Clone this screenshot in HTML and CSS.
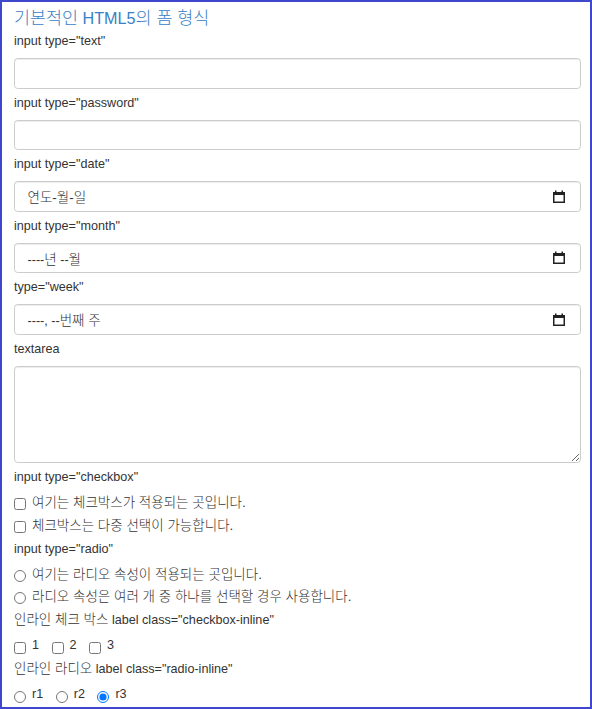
FILE: index.html
```html
<!DOCTYPE html>
<html lang="ko">
<head>
<meta charset="utf-8">
<title>기본적인 HTML5의 폼 형식</title>
<link rel="stylesheet" href="styles.css">
</head>
<body>
<div class="page">
  <h1 class="title"><span class="ko">기본적인</span> HTML5<span class="ko">의 폼 형식</span></h1>

  <label class="lbl">input type="text"</label>
  <input class="field" type="text">

  <label class="lbl">input type="password"</label>
  <input class="field" type="password">

  <label class="lbl">input type="date"</label>
  <div class="field picker">
    <span class="ko">연도-월-일</span>
    <svg class="cal" width="12" height="13" viewBox="0 0 12 13"><rect x="0.75" y="2.75" width="10.5" height="9.5" fill="none" stroke="#222" stroke-width="1.5"/><rect x="0" y="2" width="12" height="3" fill="#222"/><rect x="2" y="0.5" width="1.5" height="2" fill="#222"/><rect x="8.5" y="0.5" width="1.5" height="2" fill="#222"/></svg>
  </div>

  <label class="lbl">input type="month"</label>
  <div class="field picker">
    <span>----<span class="ko">년</span> --<span class="ko">월</span></span>
    <svg class="cal" width="12" height="13" viewBox="0 0 12 13"><rect x="0.75" y="2.75" width="10.5" height="9.5" fill="none" stroke="#222" stroke-width="1.5"/><rect x="0" y="2" width="12" height="3" fill="#222"/><rect x="2" y="0.5" width="1.5" height="2" fill="#222"/><rect x="8.5" y="0.5" width="1.5" height="2" fill="#222"/></svg>
  </div>

  <label class="lbl">type="week"</label>
  <div class="field picker">
    <span>----, --<span class="ko">번째 주</span></span>
    <svg class="cal" width="12" height="13" viewBox="0 0 12 13"><rect x="0.75" y="2.75" width="10.5" height="9.5" fill="none" stroke="#222" stroke-width="1.5"/><rect x="0" y="2" width="12" height="3" fill="#222"/><rect x="2" y="0.5" width="1.5" height="2" fill="#222"/><rect x="8.5" y="0.5" width="1.5" height="2" fill="#222"/></svg>
  </div>

  <label class="lbl">textarea</label>
  <textarea class="field area"></textarea>

  <label class="lbl">input type="checkbox"</label>
  <label class="check"><input type="checkbox"><span class="ko">여기는 체크박스가 적용되는 곳입니다.</span></label>
  <label class="check next"><input type="checkbox"><span class="ko">체크박스는 다중 선택이 가능합니다.</span></label>

  <label class="lbl">input type="radio"</label>
  <label class="check"><input type="radio" name="opt"><span class="ko">여기는 라디오 속성이 적용되는 곳입니다.</span></label>
  <label class="check next"><input type="radio" name="opt"><span class="ko">라디오 속성은 여러 개 중 하나를 선택할 경우 사용합니다.</span></label>

  <label class="lbl"><span class="ko">인라인 체크 박스</span> label class="checkbox-inline"</label>
  <div class="inline-row">
    <label class="inline"><input type="checkbox"><span>1</span></label>
    <label class="inline"><input type="checkbox"><span>2</span></label>
    <label class="inline"><input type="checkbox"><span>3</span></label>
  </div>

  <label class="lbl"><span class="ko">인라인 라디오</span> label class="radio-inline"</label>
  <div class="inline-row">
    <label class="inline"><input type="radio" name="ri"><span>r1</span></label>
    <label class="inline"><input type="radio" name="ri"><span>r2</span></label>
    <label class="inline"><input type="radio" name="ri" checked><span>r3</span></label>
  </div>
</div>
</body>
</html>
```

FILE: styles.css
```css
html, body {
  margin: 0;
  padding: 0;
  background: #fff;
}

.page {
  box-sizing: border-box;
  width: 592px;
  height: 709px;
  border: 2px solid #3f48cc;
  padding: 0 9px 0 12px;
  display: flex;
  flex-direction: column;
  overflow: hidden;
  font-family: "Liberation Sans", "Noto Sans CJK KR", sans-serif;
  font-size: 12.6px;
  color: #333;
}

.ko {
  font-size: 13.5px;
  font-weight: 300;
}

.title {
  margin: 7px 0 0;
  font-size: 16.2px;
  line-height: 18px;
  font-weight: normal;
  color: #3a80c4;
}

.title .ko {
  font-size: 17.4px;
}

.lbl {
  display: block;
  line-height: 18px;
  margin: 5px 0 8px;
}

.field {
  box-sizing: border-box;
  width: 100%;
  height: 30.5px;
  margin: 0;
  padding: 0 11px;
  border: 1px solid #ccc;
  border-radius: 3.6px;
  background: #fff;
  box-shadow: inset 0 1px 1px rgba(0, 0, 0, 0.075);
  font-family: inherit;
  font-size: 12.6px;
  color: #333;
}

.picker {
  display: flex;
  align-items: center;
  justify-content: space-between;
  padding: 0 15.5px 0 12.5px;
}

.cal {
  display: block;
}

.area {
  height: 97.5px;
  padding: 6px 11px;
  resize: vertical;
}

.check {
  display: flex;
  align-items: flex-start;
  height: 18px;
  line-height: 18px;
}

.check.next {
  margin-top: 4.5px;
}

.check input,
.inline input {
  width: 12px;
  height: 12px;
  margin: 4px 6px 0 0;
  flex: none;
}

.check span {
  white-space: nowrap;
}

.inline-row {
  display: flex;
  height: 18px;
  line-height: 18px;
  gap: 12.5px;
}

.inline {
  display: flex;
  align-items: flex-start;
}

.inline input {
  margin-top: 4.5px;
}

.inline span {
  margin-top: -1px;
}
```
